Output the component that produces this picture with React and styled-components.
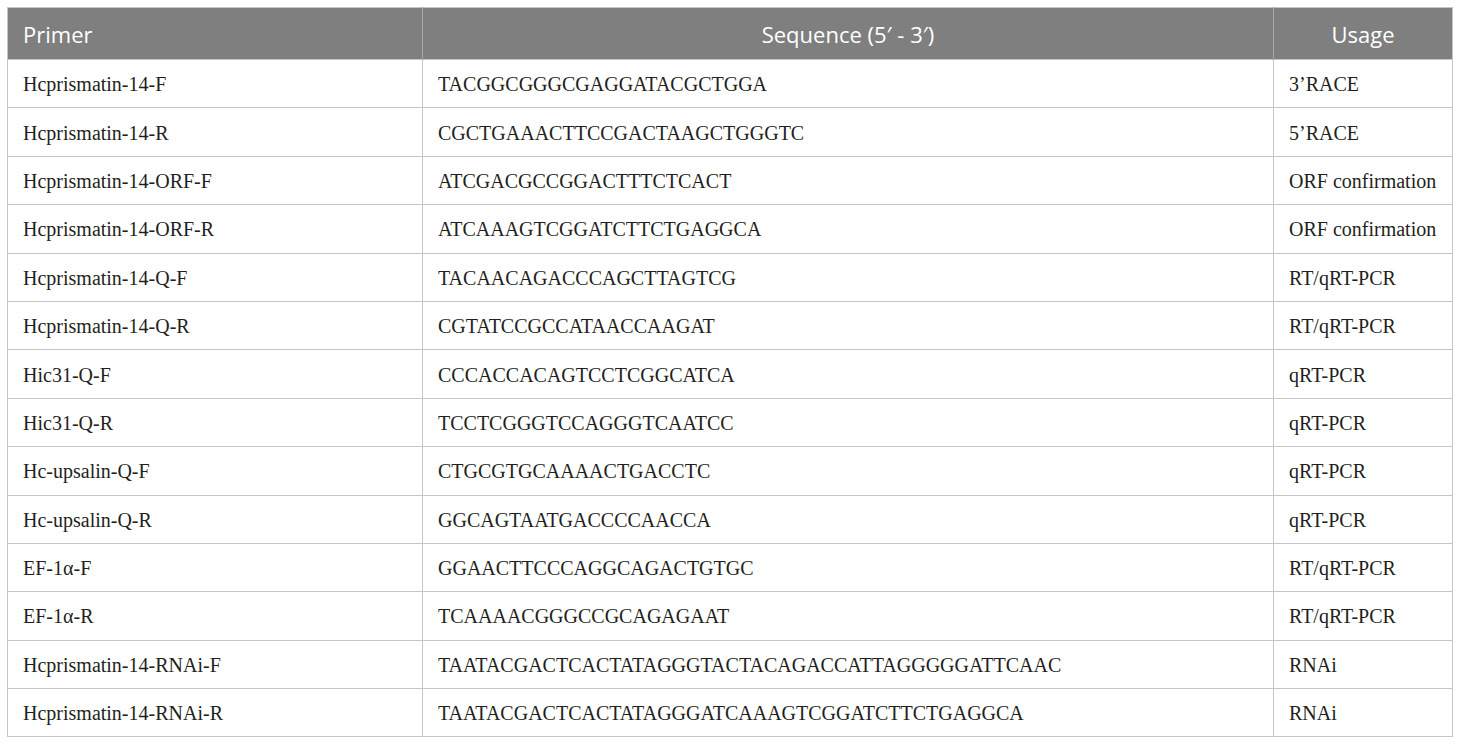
import React from 'react';
import styled, { createGlobalStyle } from 'styled-components';

const GlobalStyle = createGlobalStyle`
  html, body {
    margin: 0;
    padding: 0;
    background: #fff;
  }
`;

const Page = styled.div`
  padding: 7px 8px 0 7px;
`;

const Table = styled.table`
  width: 1445px;
  border-collapse: collapse;
  table-layout: fixed;
  border: 1px solid #c6c6c6;
`;

const HeadRow = styled.tr`
  height: 52px;
  background: #7f7f7f;
`;

const HeadCell = styled.th`
  padding: 0 15px;
  font-family: "Open Sans", "Liberation Sans", sans-serif;
  font-size: 22px;
  font-weight: 400;
  color: #fff;
  text-align: ${(p) => p.$align || 'left'};
  border-left: 1px solid #a9a9a9;
  &:first-child {
    border-left: none;
  }
`;

const Row = styled.tr`
  height: 48.4px;
`;

const Cell = styled.td`
  padding: 2px 15px 0;
  font-family: "Liberation Serif", "Times New Roman", serif;
  font-size: 20px;
  color: #231f20;
  border: 1px solid #c6c6c6;
  white-space: nowrap;
`;

const rows = [
  ['Hcprismatin-14-F', 'TACGGCGGGCGAGGATACGCTGGA', '3’RACE'],
  ['Hcprismatin-14-R', 'CGCTGAAACTTCCGACTAAGCTGGGTC', '5’RACE'],
  ['Hcprismatin-14-ORF-F', 'ATCGACGCCGGACTTTCTCACT', 'ORF confirmation'],
  ['Hcprismatin-14-ORF-R', 'ATCAAAGTCGGATCTTCTGAGGCA', 'ORF confirmation'],
  ['Hcprismatin-14-Q-F', 'TACAACAGACCCAGCTTAGTCG', 'RT/qRT-PCR'],
  ['Hcprismatin-14-Q-R', 'CGTATCCGCCATAACCAAGAT', 'RT/qRT-PCR'],
  ['Hic31-Q-F', 'CCCACCACAGTCCTCGGCATCA', 'qRT-PCR'],
  ['Hic31-Q-R', 'TCCTCGGGTCCAGGGTCAATCC', 'qRT-PCR'],
  ['Hc-upsalin-Q-F', 'CTGCGTGCAAAACTGACCTC', 'qRT-PCR'],
  ['Hc-upsalin-Q-R', 'GGCAGTAATGACCCCAACCA', 'qRT-PCR'],
  ['EF-1α-F', 'GGAACTTCCCAGGCAGACTGTGC', 'RT/qRT-PCR'],
  ['EF-1α-R', 'TCAAAACGGGCCGCAGAGAAT', 'RT/qRT-PCR'],
  ['Hcprismatin-14-RNAi-F', 'TAATACGACTCACTATAGGGTACTACAGACCATTAGGGGGATTCAAC', 'RNAi'],
  ['Hcprismatin-14-RNAi-R', 'TAATACGACTCACTATAGGGATCAAAGTCGGATCTTCTGAGGCA', 'RNAi'],
];

export default function App() {
  return (
    <Page>
      <GlobalStyle />
      <Table>
        <colgroup>
          <col style={{ width: 415 }} />
          <col style={{ width: 851 }} />
          <col style={{ width: 179 }} />
        </colgroup>
        <thead>
          <HeadRow>
            <HeadCell>Primer</HeadCell>
            <HeadCell $align="center">Sequence (5′ - 3′)</HeadCell>
            <HeadCell $align="center">Usage</HeadCell>
          </HeadRow>
        </thead>
        <tbody>
          {rows.map((r) => (
            <Row key={r[0]}>
              <Cell>{r[0]}</Cell>
              <Cell>{r[1]}</Cell>
              <Cell>{r[2]}</Cell>
            </Row>
          ))}
        </tbody>
      </Table>
    </Page>
  );
}
